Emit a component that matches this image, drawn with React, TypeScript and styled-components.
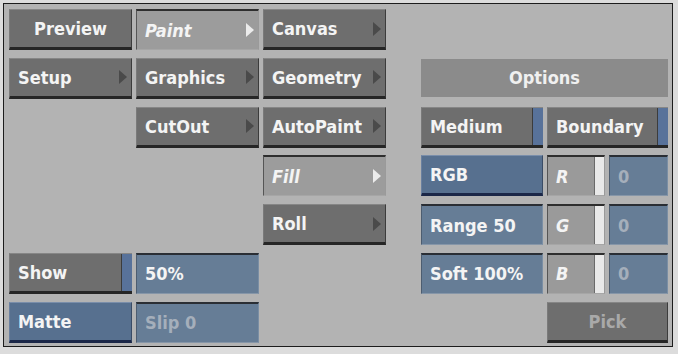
import React from 'react';
import styled, { createGlobalStyle, css } from 'styled-components';

const GlobalStyle = createGlobalStyle`
  html, body {
    margin: 0;
    padding: 0;
    background: #dcdcdc;
  }
`;

const Outer = styled.div`
  width: 678px;
  height: 354px;
  box-sizing: border-box;
  padding: 3px 5px 7px 3px;
  background: #dcdcdc;
`;

const Panel = styled.div`
  box-sizing: border-box;
  height: 344px;
  border: 1px solid #1c1c1c;
  background: #b3b3b3;
  padding: 5px 0 0 5px;
  display: grid;
  grid-template-columns: 123px 123px 123px 27px 122px 58px 59px;
  grid-template-rows: repeat(7, 41px);
  column-gap: 4px;
  row-gap: 7.8px;
`;

const cellBase = css<{ $col: string; $row: number }>`
  grid-column: ${(p) => p.$col};
  grid-row: ${(p) => p.$row};
  box-sizing: border-box;
  display: flex;
  align-items: center;
  padding: 0 0 0 8px;
  font-family: 'DejaVu Sans Condensed', 'DejaVu Sans', sans-serif;
  font-stretch: condensed;
  font-weight: bold;
  font-size: 18px;
  color: #f4f4f4;
  white-space: nowrap;
  overflow: hidden;
`;

const raised = css`
  border-top: 1px solid #868686;
  border-left: 1px solid #7a7a7a;
  border-right: 1px solid #3c3c3c;
  border-bottom: 3px solid #262626;
`;

const inset = css`
  border-top: 2px solid #2e2e2e;
  border-left: 1px solid #555;
  border-right: 1px solid #9a9a9a;
  border-bottom: 1px solid #a6a6a6;
`;

const Button = styled.div<{ $col: string; $row: number; $center?: boolean; $dim?: boolean }>`
  ${cellBase}
  ${raised}
  background: #6e6e6e;
  justify-content: ${(p) => (p.$center ? 'center' : 'flex-start')};
  padding-right: ${(p) => (p.$center ? '8px' : '0')};
  color: ${(p) => (p.$dim ? '#a9a9a9' : '#f4f4f4')};
`;

const Selected = styled.div<{ $col: string; $row: number }>`
  ${cellBase}
  ${inset}
  background: #9c9c9c;
  font-style: italic;
`;

const BlueButton = styled.div<{ $col: string; $row: number }>`
  ${cellBase}
  background: #57708f;
  border-top: 1px solid #7a8eaa;
  border-left: 1px solid #6a80a0;
  border-right: 1px solid #3a4c66;
  border-bottom: 3px solid #1b2748;
`;

const Field = styled.div<{ $col: string; $row: number; $dim?: boolean }>`
  ${cellBase}
  background: #667d96;
  border-top: 2px solid #2a2e34;
  border-left: 1px solid #4d5d70;
  border-right: 1px solid #7a8ea4;
  border-bottom: 1px solid #8696a8;
  color: ${(p) => (p.$dim ? '#a5afbb' : '#f4f4f4')};
`;

const Toggle = styled.div<{ $col: string; $row: number }>`
  ${cellBase}
  ${raised}
  background: #6e6e6e;
  align-items: stretch;
  padding: 0;
  border-right: none;
`;

const ToggleLabel = styled.span`
  flex: 1;
  display: flex;
  align-items: center;
  padding-left: 8px;
  border-right: 1px solid #3c3c3c;
`;

const ToggleStrip = styled.span`
  width: 10px;
  flex: none;
  background: #58729a;
  border-top: 1px solid #7a90b0;
  margin-top: -1px;
`;

const Slider = styled.div<{ $col: string; $row: number }>`
  ${cellBase}
  ${inset}
  background: #9a9a9a;
  font-style: italic;
  align-items: stretch;
  padding: 0;
`;

const SliderLabel = styled.span`
  flex: 1;
  display: flex;
  align-items: center;
  padding-left: 8px;
`;

const SliderThumb = styled.span`
  width: 9px;
  flex: none;
  background: #e9e9e9;
  border-left: 1px solid #6a6a6a;
`;

const Header = styled.div<{ $col: string; $row: number }>`
  ${cellBase}
  background: #8b8b8b;
  justify-content: center;
  padding: 0;
  margin: 1px 0 2px;
  color: #f0f0f0;
`;

const Arrow = styled.span<{ $light?: boolean }>`
  margin-left: auto;
  margin-right: 4px;
  flex: none;
  width: 0;
  height: 0;
  border-top: 7px solid transparent;
  border-bottom: 7px solid transparent;
  border-left: 8px solid ${(p) => (p.$light ? '#ececec' : '#4a4a4a')};
`;

export default function App() {
  return (
    <>
      <GlobalStyle />
      <Outer>
        <Panel>
          <Button $col="1" $row={1} $center>Preview</Button>
          <Selected $col="2" $row={1}>Paint<Arrow $light /></Selected>
          <Button $col="3" $row={1}>Canvas<Arrow /></Button>

          <Button $col="1" $row={2}>Setup<Arrow /></Button>
          <Button $col="2" $row={2}>Graphics<Arrow /></Button>
          <Button $col="3" $row={2}>Geometry<Arrow /></Button>
          <Header $col="5 / 8" $row={2}>Options</Header>

          <Button $col="2" $row={3}>CutOut<Arrow /></Button>
          <Button $col="3" $row={3}>AutoPaint<Arrow /></Button>
          <Toggle $col="5" $row={3}>
            <ToggleLabel>Medium</ToggleLabel>
            <ToggleStrip />
          </Toggle>
          <Toggle $col="6 / 8" $row={3}>
            <ToggleLabel>Boundary</ToggleLabel>
            <ToggleStrip />
          </Toggle>

          <Selected $col="3" $row={4}>Fill<Arrow $light /></Selected>
          <BlueButton $col="5" $row={4}>RGB</BlueButton>
          <Slider $col="6" $row={4}>
            <SliderLabel>R</SliderLabel>
            <SliderThumb />
          </Slider>
          <Field $col="7" $row={4} $dim>0</Field>

          <Button $col="3" $row={5}>Roll<Arrow /></Button>
          <Field $col="5" $row={5}>Range 50</Field>
          <Slider $col="6" $row={5}>
            <SliderLabel>G</SliderLabel>
            <SliderThumb />
          </Slider>
          <Field $col="7" $row={5} $dim>0</Field>

          <Toggle $col="1" $row={6}>
            <ToggleLabel>Show</ToggleLabel>
            <ToggleStrip />
          </Toggle>
          <Field $col="2" $row={6}>50%</Field>
          <Field $col="5" $row={6}>Soft 100%</Field>
          <Slider $col="6" $row={6}>
            <SliderLabel>B</SliderLabel>
            <SliderThumb />
          </Slider>
          <Field $col="7" $row={6} $dim>0</Field>

          <BlueButton $col="1" $row={7}>Matte</BlueButton>
          <Field $col="2" $row={7} $dim>Slip 0</Field>
          <Button $col="6 / 8" $row={7} $center $dim>Pick</Button>
        </Panel>
      </Outer>
    </>
  );
}
